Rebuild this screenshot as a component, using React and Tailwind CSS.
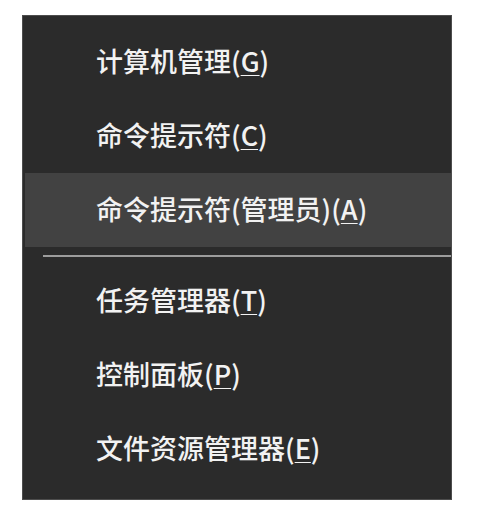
import React from "react";

const topItems = [
  { label: "计算机管理", key: "G" },
  { label: "命令提示符", key: "C" },
  { label: "命令提示符(管理员)", key: "A", active: true },
];

const bottomItems = [
  { label: "任务管理器", key: "T" },
  { label: "控制面板", key: "P" },
  { label: "文件资源管理器", key: "E" },
];

const MenuItem = ({ item }) => (
  <div
    className={
      "h-[74px] flex items-center pl-[71px] pb-[4px] " +
      (item.active ? "bg-[#424242]" : "")
    }
  >
    <span className="text-[27px] leading-none text-[#f2f2f2] font-medium">
      {item.label}(<span className="underline underline-offset-[3px] decoration-1">{item.key}</span>)
    </span>
  </div>
);

const App = () => {
  return (
    <div
      className="w-[500px] h-[513px] bg-white pt-[15px] pl-[22px]"
      style={{ fontFamily: '"Noto Sans CJK SC", "Noto Sans", sans-serif' }}
    >
      <div className="w-[430px] h-[485px] bg-[#2b2b2b] border border-[#4d4d4d] pl-[2px] pt-[9px] flex flex-col">
        {topItems.map((item, i) => (
          <MenuItem key={i} item={item} />
        ))}
        <div className="h-[17px] flex items-center pl-[18px]">
          <div className="flex-1 h-[2px] bg-[#9c9c9c]" />
        </div>
        {bottomItems.map((item, i) => (
          <MenuItem key={i} item={item} />
        ))}
      </div>
    </div>
  );
};

export default App;
